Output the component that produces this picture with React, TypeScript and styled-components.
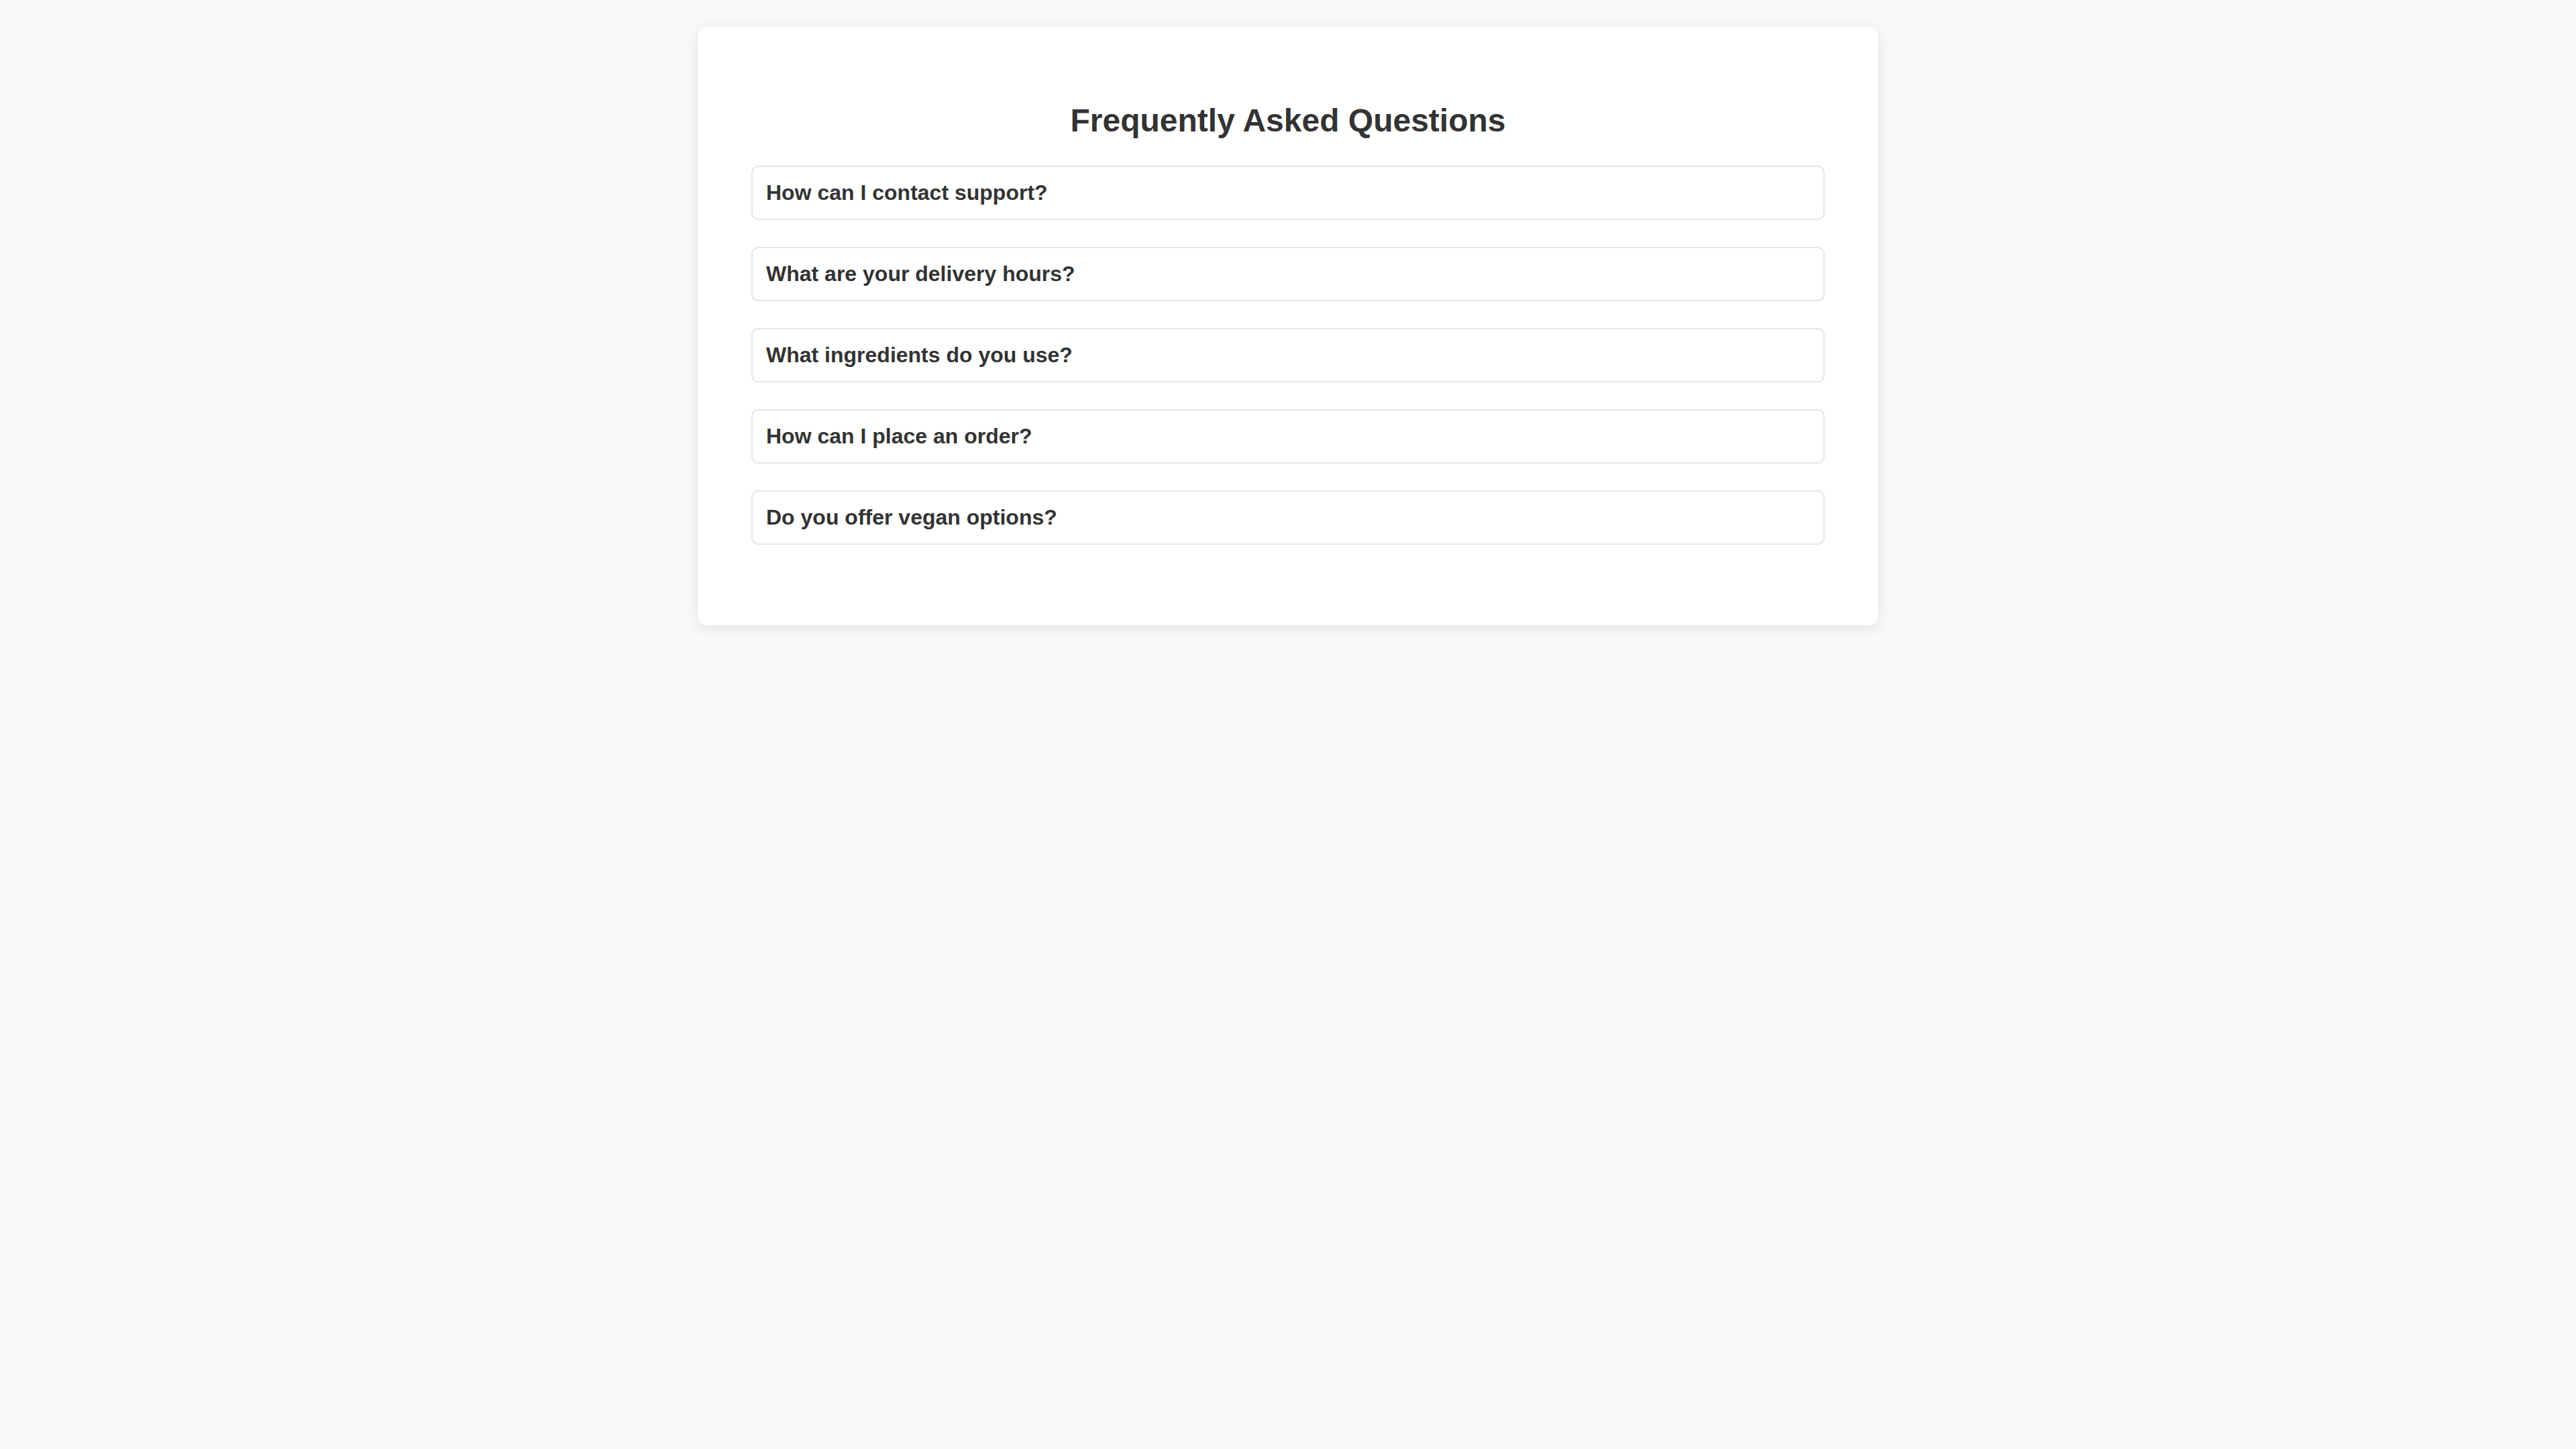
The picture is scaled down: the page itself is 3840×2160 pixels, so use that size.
import styled, { createGlobalStyle } from "styled-components";
import { useState } from "react";

const faqs = [
  {
    id: 1,
    question: "How can I contact support?",
    answer: "You can reach our support team by email or phone at any time.",
  },
  {
    id: 2,
    question: "What are your delivery hours?",
    answer: "We deliver every day from 10am to 10pm.",
  },
  {
    id: 3,
    question: "What ingredients do you use?",
    answer: "We use fresh, locally sourced ingredients.",
  },
  {
    id: 4,
    question: "How can I place an order?",
    answer: "Orders can be placed through our website or by phone.",
  },
  {
    id: 5,
    question: "Do you offer vegan options?",
    answer: "Yes, we have a range of vegan dishes on our menu.",
  },
];

export default function App() {
  const [openId, setOpenId] = useState<number | null>(null);

  return (
    <>
      <GlobalStyle />
      <Page>
        <Card>
          <Title>Frequently Asked Questions</Title>
          {faqs.map((faq) => (
            <Item key={faq.id}>
              <Question onClick={() => setOpenId(openId === faq.id ? null : faq.id)}>
                {faq.question}
              </Question>
              {openId === faq.id && <Answer>{faq.answer}</Answer>}
            </Item>
          ))}
        </Card>
      </Page>
    </>
  );
}

const GlobalStyle = createGlobalStyle`
  html, body {
    margin: 0;
    padding: 0;
    background: #f9f9f9;
  }
  body {
    font-family: "Liberation Sans", Arial, sans-serif;
    color: #333333;
  }
`;

const Page = styled.div`
  min-height: 100vh;
  padding-top: 40px;
  box-sizing: border-box;
`;

const Card = styled.div`
  width: 1760px;
  margin: 0 auto;
  padding: 80px;
  box-sizing: border-box;
  background: #ffffff;
  border-radius: 14px;
  box-shadow: 0 4px 20px rgba(0, 0, 0, 0.1);
`;

const Title = styled.h2`
  margin: 32px 0 40px 0;
  text-align: center;
  font-size: 48px;
  font-weight: 700;
  color: #333333;
`;

const Item = styled.div`
  margin-bottom: 40px;
  border: 2px solid #e5e5e5;
  border-radius: 10px;
  background: #ffffff;
`;

const Question = styled.div`
  padding: 20px;
  font-size: 32px;
  font-weight: 700;
  color: #333333;
  cursor: pointer;
`;

const Answer = styled.div`
  padding: 0 20px 20px 20px;
  font-size: 30px;
  color: #555555;
`;
